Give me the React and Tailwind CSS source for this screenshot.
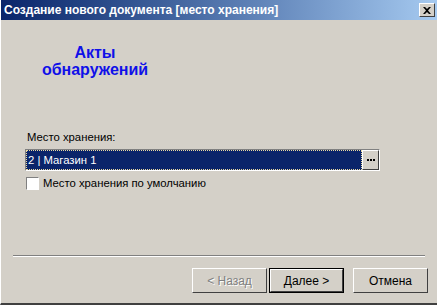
export default function App() {
  const sans = { fontFamily: "'Liberation Sans', sans-serif" };

  return (
    <div
      className="w-[437px] h-[305px] bg-[#d4d0c8] flex flex-col border-l border-l-[#ffffff] border-b-2 border-b-[#404040] overflow-hidden text-[11px] text-black"
      style={sans}
    >
      {/* Title bar */}
      <div className="h-[20px] shrink-0 flex items-center justify-between pl-[3px] pr-[2px] bg-gradient-to-r from-[#0a246a] to-[#a6caf0]">
        <span className="text-white font-bold text-[12px] leading-none">
          Создание нового документа [место хранения]
        </span>
        <div className="w-[16px] h-[14px] bg-[#d4d0c8] border border-t-white border-l-white border-r-[#404040] border-b-[#404040] flex items-center justify-center">
          <svg width="8" height="7" viewBox="0 0 8 7">
            <path d="M0 0h2l2 2 2-2h2L5 3.5 8 7H6L4 5 2 7H0l3-3.5z" fill="#000" />
          </svg>
        </div>
      </div>

      {/* Body */}
      <div className="flex-1 flex flex-col px-[24px]">
        <div className="w-[140px] pt-[24px] text-center text-[#1010e8] font-bold text-[16px] leading-[17px]">
          Акты
          <br />
          обнаружений
        </div>

        <div className="mt-[52px] text-[11.3px] leading-[14px] pl-[2px]">
          Место хранения:
        </div>

        <div className="mt-[5px] w-[355px] h-[22px] flex border border-t-[#808080] border-l-[#808080] border-r-white border-b-white">
          <div className="flex-1 bg-[#0a246a] border border-dotted border-[#e8d8a0] text-white text-[11.3px] leading-[18px] pl-[1px]">
            2 | Магазин 1
          </div>
          <div className="w-[17px] bg-[#d4d0c8] border border-t-white border-l-white border-r-[#404040] border-b-[#404040] flex items-center justify-center gap-[1px]">
            <span className="w-[2px] h-[2px] bg-black" />
            <span className="w-[2px] h-[2px] bg-black" />
            <span className="w-[2px] h-[2px] bg-black" />
          </div>
        </div>

        <div className="mt-[4px] flex items-center gap-[4px] pl-[1px]">
          <div className="w-[13px] h-[13px] bg-white border border-t-[#808080] border-l-[#808080] border-r-white border-b-white" />
          <span className="text-[11.3px]">Место хранения по умолчанию</span>
        </div>
      </div>

      {/* Separator */}
      <div className="mx-[12px] h-[2px] border-t border-t-[#808080] border-b border-b-white" />

      {/* Buttons */}
      <div className="h-[46px] flex items-start justify-end pt-[11px] pr-[9px] text-[12px]">
        <button className="w-[75px] h-[25px] mr-[2px] border border-t-white border-l-white border-r-[#404040] border-b-[#404040] text-[#808080] [text-shadow:1px_1px_0_#ffffff]">
          &lt; Назад
        </button>
        <button className="w-[75px] h-[25px] border border-black">
          <div className="h-full border border-t-white border-l-white border-r-[#404040] border-b-[#404040] flex items-center justify-center">
            Далее &gt;
          </div>
        </button>
        <button className="ml-[9px] w-[75px] h-[25px] border border-t-white border-l-white border-r-[#404040] border-b-[#404040]">
          Отмена
        </button>
      </div>
    </div>
  );
}
